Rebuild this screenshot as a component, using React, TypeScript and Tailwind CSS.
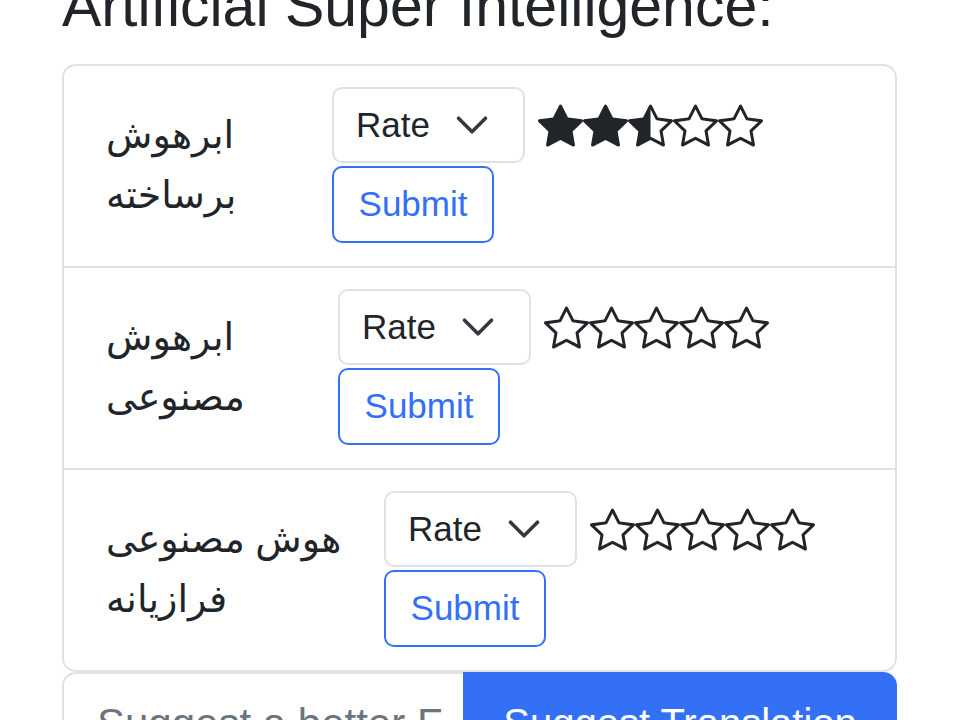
import { BsStar, BsStarFill, BsStarHalf } from 'react-icons/bs';

const terms = [
  { lines: ['ابرهوش', 'برساخته'], labelWidth: 'w-[226px]', rating: 2.5 },
  { lines: ['ابرهوش', 'مصنوعی'], labelWidth: 'w-[232px]', rating: 0 },
  { lines: ['هوش مصنوعی', 'فرازیانه'], labelWidth: 'w-[278px]', rating: 0 },
];

function Stars({ rating }: { rating: number }) {
  return (
    <div className="flex">
      {[1, 2, 3, 4, 5].map((n) => {
        const Icon = rating >= n ? BsStarFill : rating >= n - 0.5 ? BsStarHalf : BsStar;
        return <Icon key={n} size={45} className="text-[#212529]" />;
      })}
    </div>
  );
}

export default function App() {
  return (
    <div className="min-h-screen overflow-hidden bg-white px-[62px] font-['Liberation_Sans','DejaVu_Sans',sans-serif] text-[#212529]">
      <h4 className="mt-[-30px] text-[59px] font-medium leading-[72px]">Artificial Super Intelligence:</h4>

      {/* Terms card */}
      <div className="mt-[22px] w-[835px] rounded-[14px] border-2 border-[#dee2e6]">
        {terms.map((t, i) => (
          <div
            key={i}
            className={`flex items-center px-[42px] pt-[21px] pb-[23px] ${i > 0 ? 'border-t-2 border-[#dee2e6]' : ''}`}
          >
            <div className={`${t.labelWidth} shrink-0 text-[38px] leading-[60px]`}>
              {t.lines.map((l) => (
                <div key={l} dir="rtl" className="text-left">
                  {l}
                </div>
              ))}
            </div>

            <div className="flex flex-col gap-[3px]">
              <div className="flex items-center gap-[13px]">
                <div className="flex h-[76px] w-[193px] items-center justify-between rounded-[10px] border-2 border-[#dee2e6] pr-[33px] pl-[22px] text-[35px]">
                  <span>Rate</span>
                  <svg width="36" height="36" viewBox="0 0 16 16" fill="none">
                    <path d="m2 5 6 6 6-6" stroke="#343a40" strokeWidth="1.6" strokeLinecap="round" strokeLinejoin="round" />
                  </svg>
                </div>
                <Stars rating={t.rating} />
              </div>
              <button className="h-[77px] w-[162px] rounded-[10px] border-2 border-[#3370f5] text-[35px] text-[#3370f5]">
                Submit
              </button>
            </div>
          </div>
        ))}
      </div>

      {/* Suggestion input group */}
      <div className="flex h-[102px] w-[835px]">
        <input
          className="w-[401px] rounded-tl-[14px] border-2 border-r-0 border-[#dee2e6] pr-[20px] pl-[33px] text-[42px] outline-none placeholder:text-[#6c757d]"
          placeholder="Suggest a better Farsi translation"
        />
        <button className="flex-1 rounded-tr-[14px] bg-[#3370f5] text-[40px] text-white">Suggest Translation</button>
      </div>
    </div>
  );
}
